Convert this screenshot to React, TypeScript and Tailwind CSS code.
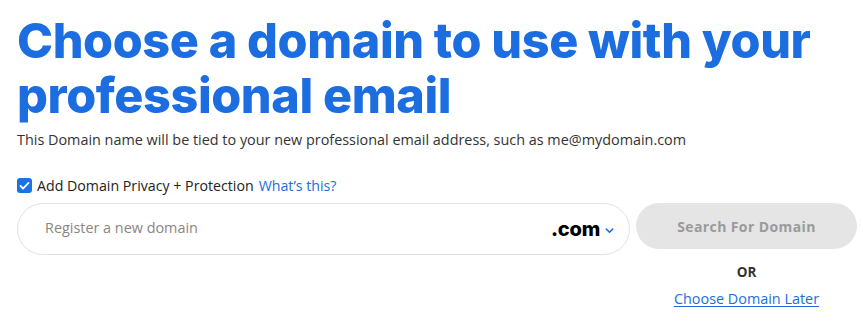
import React, { useState } from 'react'

const body = { fontFamily: '"Open Sans", "Liberation Sans", sans-serif' }
const head = { fontFamily: 'Inter, "Liberation Sans", sans-serif' }

export default function App() {
    const [privacy, setPrivacy] = useState(true)
    const [domain, setDomain] = useState('')

    return (
        <div className="w-[863px] h-[323px] bg-white pl-[17px] pr-[6px] pt-[13px]" style={body}>
            <h1 className="text-[48.5px] leading-[55px] font-extrabold text-[#1b6de0] tracking-[-0.4px]" style={head}>
                Choose a domain to use with your professional email
            </h1>
            <p className="mt-[7px] text-[14.4px] leading-[20px] text-[#333]">
                This Domain name will be tied to your new professional email address, such as me@mydomain.com
            </p>

            <label className="mt-[25px] flex items-center gap-[5px] text-[14.2px] text-[#222] cursor-pointer">
                <span
                    onClick={() => setPrivacy(!privacy)}
                    className={`w-[15px] h-[15px] rounded-[3px] flex items-center justify-center ${privacy ? 'bg-[#1a73e8]' : 'border border-gray-400'}`}
                >
                    {privacy && (
                        <svg viewBox="0 0 16 16" className="w-[13px] h-[13px]" fill="none" stroke="white" strokeWidth="2.2" strokeLinecap="round" strokeLinejoin="round">
                            <path d="M3 8.5l3.2 3.2L13 4.8" />
                        </svg>
                    )}
                </span>
                <span>Add Domain Privacy + Protection</span>
                <a href="#" className="text-[#1b6de0]">What’s this?</a>
            </label>

            <div className="mt-[7px] flex items-start gap-[6px]">
                <div className="flex-1 h-[52px] rounded-full border border-[#e2e2e2] flex items-center pl-[27px] pr-[14px]">
                    <input
                        value={domain}
                        onChange={(e) => setDomain(e.target.value)}
                        placeholder="Register a new domain"
                        className="flex-1 -mt-[3px] outline-none text-[14.4px] text-[#333] placeholder:text-[#8c857f] bg-transparent"
                    />
                    <span className="text-[20px] font-extrabold text-black tracking-[-0.2px]" style={head}>.com</span>
                    <svg viewBox="0 0 12 12" className="w-[11px] h-[11px] ml-[4px] mt-[3px]" fill="none" stroke="#1b6de0" strokeWidth="1.6" strokeLinecap="round" strokeLinejoin="round">
                        <path d="M2.5 4.5L6 8l3.5-3.5" />
                    </svg>
                </div>
                <button
                    disabled
                    className="w-[221px] h-[46px] rounded-full bg-[#e5e5e5] text-[#9a9a9a] text-[14px] font-bold tracking-[0.4px]"
                >
                    Search For Domain
                </button>
            </div>

            <div className="ml-auto w-[221px] flex flex-col items-center">
                <span className="mt-[7px] text-[13.5px] font-bold text-[#333]">OR</span>
                <a href="#" className="mt-[5px] text-[14.4px] text-[#1b6de0] underline underline-offset-2">Choose Domain Later</a>
            </div>
        </div>
    )
}
